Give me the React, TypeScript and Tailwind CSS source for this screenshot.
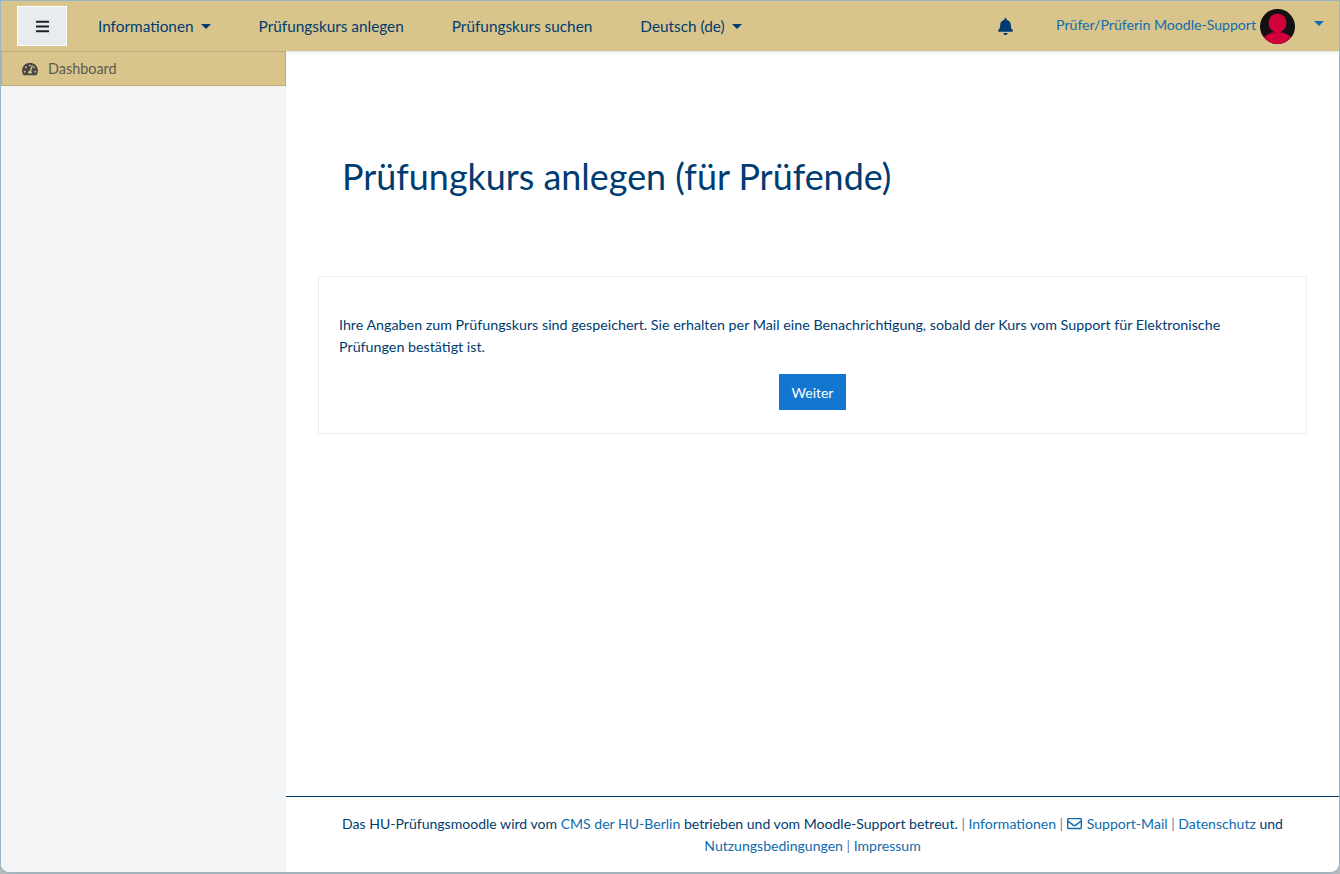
import { FaBars, FaBell, FaRegEnvelope, FaTachometerAlt } from 'react-icons/fa';

const Caret = ({ className }: { className: string }) => (
  <span className={`ml-[7px] inline-block h-0 w-0 border-x-[5px] border-t-[5px] border-x-transparent align-[3px] ${className}`} />
);

const NavItem = ({ label, caret }: { label: string; caret?: boolean }) => (
  <a className="mt-[1px] whitespace-nowrap text-[15.35px] text-[#003c70]">
    {label}
    {caret && <Caret className="border-t-[#003c70]" />}
  </a>
);

const FootLink = ({ children }: { children: React.ReactNode }) => <a className="text-[#0f6cae]">{children}</a>;

const Sep = () => <span className="text-[#5f80a3]"> | </span>;

export default function App() {
  return (
    <div className="h-[874px] w-[1340px] bg-[#b4b9bc]">
      <div className="flex h-full flex-col overflow-hidden rounded-b-[10px] border border-b-2 border-[#9bb5c5] border-b-[#a3b4bf] bg-white font-['Lato','Noto_Sans',sans-serif] text-[#003c70]">
        <header className="flex h-[50px] shrink-0 items-center bg-[#d9c58b] pl-4 pr-[15px] shadow-[0_1px_4px_rgba(0,0,0,0.12)]">
          <button className="flex h-[40px] w-[50px] items-center justify-center border border-white bg-[#e9ecef] text-[#1d2125]">
            <FaBars className="text-[15px]" />
          </button>
          <nav className="ml-[31px] flex items-center gap-12">
            <NavItem label="Informationen" caret />
            <NavItem label="Prüfungskurs anlegen" />
            <NavItem label="Prüfungskurs suchen" />
            <NavItem label="Deutsch (de)" caret />
          </nav>
          <div className="ml-auto flex items-center">
            <FaBell className="text-[17px] text-[#003c70]" />
            <span className="ml-[42px] mb-[2px] text-[14.1px] text-[#0f6cae]">Prüfer/Prüferin Moodle-Support</span>
            <span className="ml-[4px] flex h-[35px] w-[35px] items-center justify-center rounded-full bg-[#111]">
              <svg viewBox="0 0 35 35" className="h-[35px] w-[35px]">
                <clipPath id="avatar">
                  <circle cx="17.5" cy="17.5" r="17.5" />
                </clipPath>
                <g clipPath="url(#avatar)" fill="#d1003a">
                  <ellipse cx="17.5" cy="14" rx="9" ry="9.5" />
                  <ellipse cx="17.5" cy="33" rx="15" ry="10" />
                </g>
              </svg>
            </span>
            <Caret className="mb-[6px] ml-[19px] border-t-[#0f6cae]" />
          </div>
        </header>

        <div className="flex min-h-0 flex-1">
          <aside className="w-[285px] shrink-0 bg-[#f2f4f6]">
            <div className="flex h-[35px] items-center border border-[#bda976] bg-[#d9c58b] pl-[20px] text-[14.4px] text-[#5b5b52]">
              <FaTachometerAlt className="text-[16px] text-[#4a4a45]" />
              <span className="ml-[10px] mt-[1px]">Dashboard</span>
            </div>
          </aside>

          <main className="flex min-w-0 flex-1 flex-col">
            <div className="flex-1 px-8">
              <h1 className="ml-[24px] mt-[101px] text-[35.9px] font-normal leading-[50px] text-[#003c70]">
                Prüfungkurs anlegen (für Prüfende)
              </h1>
              <section className="mt-[74px] h-[158px] border border-[#eceef0] px-5 pt-[37px]">
                <p className="text-[14.29px] leading-[22px]">
                  Ihre Angaben zum Prüfungskurs sind gespeichert. Sie erhalten per Mail eine Benachrichtigung, sobald der Kurs vom Support für Elektronische Prüfungen bestätigt ist.
                </p>
                <div className="mt-4 flex justify-center">
                  <button className="h-9 w-[67px] bg-[#1177d1] text-[14px] text-white">Weiter</button>
                </div>
              </section>
            </div>
            <footer className="h-[76px] border-t border-[#003c70] px-[50px] pt-4 text-center text-[14.05px] leading-[22px]">
              Das HU-Prüfungsmoodle wird vom <FootLink>CMS der HU-Berlin</FootLink> betrieben und vom Moodle-Support betreut.
              <Sep />
              <FootLink>Informationen</FootLink>
              <Sep />
              <FootLink>
                <FaRegEnvelope className="mr-[5px] inline align-[-2px] text-[15px]" />
                Support-Mail
              </FootLink>
              <Sep />
              <FootLink>Datenschutz</FootLink> und <FootLink>Nutzungsbedingungen</FootLink>
              <Sep />
              <FootLink>Impressum</FootLink>
            </footer>
          </main>
        </div>
      </div>
    </div>
  );
}
